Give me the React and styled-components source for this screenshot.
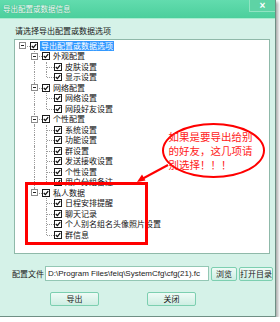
import React from 'react';
import styled, { createGlobalStyle } from 'styled-components';

const GlobalStyle = createGlobalStyle`
  html, body {
    margin: 0;
    padding: 0;
    background: #ffffff;
  }
  body {
    font-family: "Noto Sans CJK SC", "Noto Sans", sans-serif;
  }
`;

const CJK = `"Noto Sans CJK SC", "Noto Sans", sans-serif`;

/* ---------- Window frame ---------- */
const Window = styled.div`
  width: 276px;
  height: 317px;
  display: flex;
  flex-direction: column;
  background: #d5f2e8;
  border-right: 1px solid #6f8f84;
  border-bottom: 1px solid #6f8f84;
  box-sizing: border-box;
  box-shadow: 2px 2px 3px rgba(0, 0, 0, 0.35);
`;

const TitleBar = styled.div`
  height: 19px;
  display: flex;
  align-items: flex-start;
  justify-content: space-between;
  background: linear-gradient(to bottom, #62dcae, #4ccf9c);
  border-bottom: 1px solid #a9eccf;
  box-sizing: border-box;
`;

const Title = styled.div`
  padding: 4px 0 0 3px;
  font-family: ${CJK};
  font-size: 7.5px;
  line-height: 10px;
  color: #f4fffa;
  text-shadow: 0 0 1px #2c8e68;
`;

const CloseButton = styled.div`
  width: 25px;
  height: 11px;
  display: flex;
  align-items: center;
  justify-content: center;
  background: #5ed3a5;
  border-left: 1px solid #8fe4c2;
  border-bottom: 1px solid #8fe4c2;
  color: #ffffff;
  font-family: "Liberation Sans", sans-serif;
  font-size: 10px;
  font-weight: bold;
  line-height: 11px;
`;

const Body = styled.div`
  flex: 1;
  display: flex;
  flex-direction: column;
  padding: 0 2px 0 12px;
`;

const Prompt = styled.div`
  margin: 7px 0 0 3px;
  font-family: ${CJK};
  font-size: 8px;
  line-height: 10px;
  color: #1a1a1a;
`;

/* ---------- Tree ---------- */
const TreeBox = styled.div`
  position: relative;
  width: 256px;
  height: 215px;
  margin: 3px 0 0 2px;
  padding-top: 0.5px;
  background: #ffffff;
  border: 1px solid #8fb9a9;
  box-sizing: border-box;
  overflow: hidden;
`;

const Row = styled.div`
  display: flex;
  align-items: center;
  height: 10.5px;
  padding-left: 2px;
`;

const Guide = styled.div`
  position: relative;
  width: 12px;
  height: 100%;
  flex: 0 0 12px;
  &::before {
    content: '';
    display: ${(p) => (p.$line ? 'block' : 'none')};
    position: absolute;
    left: 5px;
    top: 0;
    bottom: 0;
    border-left: 1px dotted #9a9a9a;
  }
`;

const Connector = styled.div`
  position: relative;
  width: 12px;
  height: 100%;
  flex: 0 0 12px;
  display: flex;
  align-items: center;
  justify-content: center;
  &::before {
    content: '';
    position: absolute;
    left: 5px;
    top: ${(p) => (p.$up ? '0' : '50%')};
    bottom: ${(p) => (p.$down ? '0' : '50%')};
    border-left: 1px dotted #9a9a9a;
  }
  &::after {
    content: '';
    position: absolute;
    left: 6px;
    right: -1px;
    top: 5px;
    border-top: 1px dotted #9a9a9a;
  }
`;

const Expander = styled.div`
  position: relative;
  z-index: 1;
  width: 7px;
  height: 7px;
  margin-left: -1px;
  box-sizing: border-box;
  border: 1px solid #8c8c8c;
  background: #ffffff;
  &::after {
    content: '';
    position: absolute;
    left: 1px;
    right: 1px;
    top: 2px;
    height: 1px;
    background: #222;
  }
`;

const Check = styled.div`
  width: 8px;
  height: 8px;
  flex: 0 0 8px;
  margin-left: 1px;
  box-sizing: border-box;
  border: 1px solid #1b1b1b;
  background: #ffffff;
  display: flex;
  align-items: center;
  justify-content: center;
`;

const Label = styled.div`
  margin-left: 2px;
  padding: 0 1px;
  font-family: ${CJK};
  font-size: 8px;
  line-height: 10px;
  white-space: nowrap;
  color: ${(p) => (p.$selected ? '#ffffff' : '#111111')};
  background: ${(p) => (p.$selected ? '#3399ff' : 'transparent')};
`;

/* ---------- Red annotation overlay ---------- */
const MarkBox = styled.div`
  position: absolute;
  left: 10px;
  top: 142px;
  width: 123px;
  height: 63px;
  border: 3px solid #ff0000;
  box-sizing: border-box;
`;

const Bubble = styled.div`
  position: absolute;
  left: 147px;
  top: 83px;
  width: 103px;
  height: 55px;
  border: 2px solid #ff0000;
  border-radius: 50%;
  box-sizing: border-box;
  display: flex;
  align-items: center;
  justify-content: center;
`;

const BubbleText = styled.div`
  width: 90px;
  font-family: ${CJK};
  font-size: 10.5px;
  line-height: 14px;
  color: #ff1a1a;
  text-align: left;
`;

const ArrowSvg = styled.svg`
  position: absolute;
  left: 118px;
  top: 118px;
  overflow: visible;
`;

/* ---------- Bottom area ---------- */
const PathRow = styled.div`
  display: flex;
  align-items: center;
  height: 15px;
  margin-top: 12px;
`;

const PathLabel = styled.div`
  width: 32px;
  font-family: ${CJK};
  font-size: 8px;
  line-height: 10px;
  color: #1a1a1a;
  white-space: nowrap;
`;

const PathInput = styled.div`
  width: 165px;
  height: 15px;
  margin-left: 1px;
  padding-left: 2px;
  box-sizing: border-box;
  background: #ffffff;
  border: 1px solid #93c7b4;
  font-family: "Liberation Sans", sans-serif;
  font-size: 8px;
  line-height: 13px;
  color: #1a1a1a;
  white-space: nowrap;
  overflow: hidden;
`;

const SmallButton = styled.div`
  width: ${(p) => p.$w}px;
  height: 14px;
  margin-left: 2px;
  box-sizing: border-box;
  display: flex;
  align-items: center;
  justify-content: center;
  background: linear-gradient(to bottom, #eefbf6, #cdeee2);
  border: 1px solid #7ccfb0;
  border-radius: 2px;
  font-family: ${CJK};
  font-size: 8px;
  line-height: 10px;
  color: #1a1a1a;
  white-space: nowrap;
`;

const ButtonRow = styled.div`
  display: flex;
  gap: 48px;
  margin-top: 11px;
  padding-left: 38px;
`;

const DialogButton = styled(SmallButton)`
  height: 14px;
  margin-left: 0;
`;

const tree = {
  label: '导出配置或数据选项',
  selected: true,
  children: [
    { label: '外观配置', children: [{ label: '皮肤设置' }, { label: '显示设置' }] },
    { label: '网络配置', children: [{ label: '网络设置' }, { label: '网段好友设置' }] },
    {
      label: '个性配置',
      children: [
        { label: '系统设置' },
        { label: '功能设置' },
        { label: '群设置' },
        { label: '发送接收设置' },
        { label: '个性设置' },
        { label: '用户分组备注' },
      ],
    },
    {
      label: '私人数据',
      children: [
        { label: '日程安排提醒' },
        { label: '聊天记录' },
        { label: '个人别名组名头像照片设置' },
        { label: '群信息' },
      ],
    },
  ],
};

// flatten the tree into rows, remembering which guide columns carry a line
const flatten = (node, level, guides, isLast, isRoot, out) => {
  out.push({ ...node, level, guides, isLast, isRoot });
  (node.children || []).forEach((child, i, arr) => {
    const nextGuides = level === 0 && isRoot ? [] : [...guides, !isLast];
    flatten(child, level + 1, isRoot ? [false] : nextGuides, i === arr.length - 1, false, out);
  });
  return out;
};

const CheckMark = () => (
  <svg width="6" height="6" viewBox="0 0 6 6">
    <path d="M0.8 3 L2.4 4.6 L5.2 1.2" fill="none" stroke="#111" strokeWidth="1.3" />
  </svg>
);

const TreeRow = ({ row }) => (
  <Row>
    {row.guides.map((g, i) => (
      <Guide key={i} $line={g} />
    ))}
    <Connector $up={!row.isRoot} $down={!row.isRoot && !row.isLast}>
      {row.children && <Expander />}
    </Connector>
    <Check>
      <CheckMark />
    </Check>
    <Label $selected={row.selected}>{row.label}</Label>
  </Row>
);

const App = () => {
  const rows = flatten(tree, 0, [], true, true, []);

  return (
    <>
      <GlobalStyle />
      <Window>
        <TitleBar>
          <Title>导出配置或数据信息</Title>
          <CloseButton>×</CloseButton>
        </TitleBar>
        <Body>
          <Prompt>请选择导出配置或数据选项</Prompt>
          <TreeBox>
            {rows.map((row, i) => (
              <TreeRow key={i} row={row} />
            ))}
            <MarkBox />
            <Bubble>
              <BubbleText>
                如果是要导出给别
                <br />
                的好友，这几项请
                <br />
                别选择！！！
              </BubbleText>
            </Bubble>
            <ArrowSvg width="40" height="28" viewBox="0 0 40 28">
              <line x1="35" y1="7" x2="9" y2="21" stroke="#ff0000" strokeWidth="2" />
              <polygon points="4,24 9,16.5 12.5,22.5" fill="#ff0000" />
            </ArrowSvg>
          </TreeBox>
          <PathRow>
            <PathLabel>配置文件</PathLabel>
            <PathInput>D:\Program Files\feiq\SystemCfg\cfg(21).fc</PathInput>
            <SmallButton $w={26}>浏览</SmallButton>
            <SmallButton $w={34}>打开目录</SmallButton>
          </PathRow>
          <ButtonRow>
            <DialogButton $w={49}>导出</DialogButton>
            <DialogButton $w={49}>关闭</DialogButton>
          </ButtonRow>
        </Body>
      </Window>
    </>
  );
};

export default App;
